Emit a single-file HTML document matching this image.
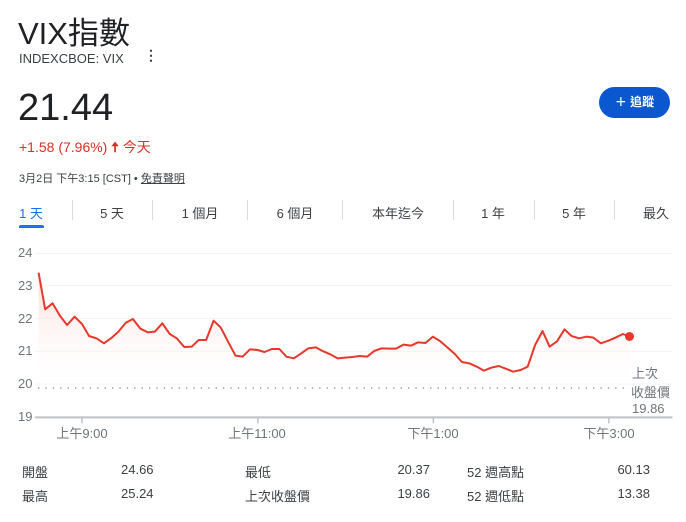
<!DOCTYPE html>
<html><head><meta charset="utf-8"><style>
body{margin:0;width:686px;height:522px;background:#fff;font-family:"Liberation Sans","Noto Sans CJK TC",sans-serif;position:relative;overflow:hidden;color:#202124}
.a{position:absolute;white-space:nowrap}
.tab{position:absolute;top:203px;font-size:13px;color:#3c4043;transform:translateX(-50%)}
.sep{position:absolute;top:200px;width:1px;height:20px;background:#dadce0}
.s{position:absolute;font-size:13px;color:#3c4043}
.y{position:absolute;left:18px;font-size:13px;color:#70757a;line-height:14px}
.x{position:absolute;top:423px;font-size:13px;color:#70757a;transform:translateX(-50%);white-space:nowrap}
</style></head><body>
<div class="a" style="left:18px;top:8px;font-size:31px;">VIX指數</div>
<div class="a" style="left:19px;top:51px;font-size:13px;color:#3c4043;">INDEXCBOE: VIX</div>
<div class="a" style="left:144px;top:47px;font-size:14px;font-weight:bold;color:#3c4043;">⋮</div>
<div class="a" style="left:18px;top:87px;font-size:38px;">21.44</div>
<div class="a" style="left:19px;top:137px;font-size:14px;color:#d93025;">+1.58 (7.96%) <b>🠅</b> 今天</div>
<div class="a" style="left:19px;top:170px;font-size:11px;color:#3c4043;">3月2日 下午3:15 [CST] • <span style="text-decoration:underline">免責聲明</span></div>
<div class="a" style="left:599px;top:87px;width:71px;height:31px;border-radius:16px;background:#0b57d0;color:#fff;font-size:12px;font-weight:bold;line-height:31px;text-align:center;">＋ 追蹤</div>
<div class="tab" style="left:31px;color:#1a73e8">1 天</div>
<div style="position:absolute;left:19px;top:225px;width:25px;height:3px;background:#1a73e8;border-radius:2px 2px 0 0"></div>
<div class="tab" style="left:112px">5 天</div>
<div class="tab" style="left:200px">1 個月</div>
<div class="tab" style="left:295px">6 個月</div>
<div class="tab" style="left:398px">本年迄今</div>
<div class="tab" style="left:493px">1 年</div>
<div class="tab" style="left:574px">5 年</div>
<div class="tab" style="left:656px">最久</div>
<div class="sep" style="left:72px"></div><div class="sep" style="left:152px"></div><div class="sep" style="left:247px"></div><div class="sep" style="left:342px"></div><div class="sep" style="left:453px"></div><div class="sep" style="left:534px"></div><div class="sep" style="left:614px"></div>
<svg style="position:absolute;left:0;top:230px" width="686" height="292" viewBox="0 0 1564 876" preserveAspectRatio="none">
<defs><linearGradient id="g" x1="0" y1="0" x2="0" y2="1"><stop offset="0" stop-color="#fbd9d6"/><stop offset="1" stop-color="#fff" stop-opacity="0"/></linearGradient></defs>
<g stroke="#f1f3f4" stroke-width="1"><line x1="80" y1="70" x2="1533" y2="70" vector-effect="non-scaling-stroke"/><line x1="80" y1="167" x2="1533" y2="167" vector-effect="non-scaling-stroke"/><line x1="80" y1="265" x2="1533" y2="265" vector-effect="non-scaling-stroke"/><line x1="80" y1="364" x2="1533" y2="364" vector-effect="non-scaling-stroke"/><line x1="80" y1="462" x2="1533" y2="462" vector-effect="non-scaling-stroke"/></g>
<line x1="80" y1="562" x2="1533" y2="562" stroke="#bdc1c6" stroke-width="2" vector-effect="non-scaling-stroke"/>
<g stroke="#bdc1c6" stroke-width="1.5"><line x1="187" y1="562" x2="187" y2="580" vector-effect="non-scaling-stroke"/><line x1="588" y1="562" x2="588" y2="580" vector-effect="non-scaling-stroke"/><line x1="988" y1="562" x2="988" y2="580" vector-effect="non-scaling-stroke"/><line x1="1388" y1="562" x2="1388" y2="580" vector-effect="non-scaling-stroke"/></g>
<polygon fill="url(#g)" points="88,128 103,238 120,220 137,258 153,285 170,260 187,282 203,318 220,325 237,340 253,325 270,305 287,278 303,267 320,296 337,307 353,305 370,280 387,312 403,325 420,351 437,350 453,330 470,330 487,272 503,292 520,335 537,377 553,380 570,358 587,360 603,366 620,357 637,357 653,380 670,385 687,370 703,355 720,352 737,364 753,373 770,385 787,383 803,381 820,378 837,380 853,363 870,355 887,356 903,356 920,344 937,347 953,337 970,339 987,320 1003,333 1020,352 1037,372 1053,396 1070,400 1087,410 1103,422 1120,413 1137,408 1153,416 1170,425 1187,420 1203,410 1220,345 1237,303 1253,350 1270,334 1287,298 1303,318 1320,325 1337,320 1353,323 1370,340 1387,332 1403,323 1420,312 1436,320 1436,476 88,476"/>
<polyline fill="none" stroke="#e8382c" stroke-width="2" vector-effect="non-scaling-stroke" stroke-linejoin="round" points="88,128 103,238 120,220 137,258 153,285 170,260 187,282 203,318 220,325 237,340 253,325 270,305 287,278 303,267 320,296 337,307 353,305 370,280 387,312 403,325 420,351 437,350 453,330 470,330 487,272 503,292 520,335 537,377 553,380 570,358 587,360 603,366 620,357 637,357 653,380 670,385 687,370 703,355 720,352 737,364 753,373 770,385 787,383 803,381 820,378 837,380 853,363 870,355 887,356 903,356 920,344 937,347 953,337 970,339 987,320 1003,333 1020,352 1037,372 1053,396 1070,400 1087,410 1103,422 1120,413 1137,408 1153,416 1170,425 1187,420 1203,410 1220,345 1237,303 1253,350 1270,334 1287,298 1303,318 1320,325 1337,320 1353,323 1370,340 1387,332 1403,323 1420,312 1436,320"/>
</svg>
<svg style="position:absolute;left:0;top:386px" width="686" height="4"><line x1="38" y1="2" x2="630" y2="2" stroke="#80868b" stroke-width="1.3" stroke-dasharray="1.3 6.1"/></svg>
<div style="position:absolute;left:625px;top:332px;width:9px;height:9px;border-radius:50%;background:#e8382c"></div>
<div class="y" style="top:246px">24</div><div class="y" style="top:279px">23</div><div class="y" style="top:312px">22</div><div class="y" style="top:344px">21</div><div class="y" style="top:377px">20</div><div class="y" style="top:410px">19</div>
<div class="x" style="left:82px">上午9:00</div><div class="x" style="left:257px">上午11:00</div><div class="x" style="left:433px">下午1:00</div><div class="x" style="left:609px">下午3:00</div>
<div class="y" style="left:632px;top:367px">上次</div><div class="y" style="left:631px;top:386px">收盤價</div><div class="y" style="left:632px;top:402px">19.86</div>
<div class="s" style="left:22px;top:462px">開盤</div><div class="s" style="left:121px;top:462px">24.66</div>
<div class="s" style="left:245px;top:462px">最低</div><div class="s" style="left:390px;top:462px;width:40px;text-align:right">20.37</div>
<div class="s" style="left:467px;top:462px">52 週高點</div><div class="s" style="left:600px;top:462px;width:50px;text-align:right">60.13</div>
<div class="s" style="left:22px;top:486px">最高</div><div class="s" style="left:121px;top:486px">25.24</div>
<div class="s" style="left:245px;top:486px">上次收盤價</div><div class="s" style="left:390px;top:486px;width:40px;text-align:right">19.86</div>
<div class="s" style="left:467px;top:486px">52 週低點</div><div class="s" style="left:600px;top:486px;width:50px;text-align:right">13.38</div>
</body></html>
